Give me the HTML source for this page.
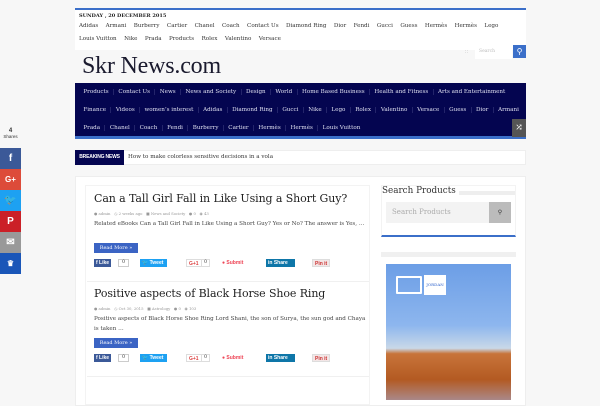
<!DOCTYPE html>
<html><head><meta charset="utf-8"><style>
*{margin:0;padding:0;box-sizing:border-box}
body{width:600px;height:400px;overflow:hidden;background:#f7f7f7;font-family:"DejaVu Serif",serif;position:relative;color:#333}
.a{position:absolute}
.top{left:75px;top:8px;width:451px;height:2px;background:#3b6fc9}
.bar{left:75px;top:10px;width:451px;height:40px;background:#fff}
.date{left:79px;top:13px;font-size:5px;font-weight:bold;color:#222}
.links{left:79px;font-size:5.6px;color:#333;white-space:nowrap}
.links span{margin-right:7.4px}
.logo{left:82px;top:53px;font-size:24px;color:#1a1a2e;font-family:"Liberation Serif",serif;letter-spacing:-.2px}
.nav{left:75px;top:83px;width:451px;height:56px;background:#040550;border-bottom:3px solid #3b6fc9}
.nav div{position:absolute;left:4px;font-size:5.6px;color:#dfe0f0;white-space:nowrap}
.nav span{display:inline-block;padding:0 4.4px;border-right:1px solid #23246a}
.shuf{left:512px;top:119px;width:14px;height:18px;background:#555;color:#fff;font-size:9px;text-align:center;line-height:18px}
.bn{left:75px;top:150px;width:451px;height:15px;background:#fff;border:1px solid #eee}
.bnl{left:75px;top:150px;width:49px;height:15px;background:#040550;color:#fff;font:bold 5px "Liberation Sans",sans-serif;text-align:center;line-height:15px;white-space:nowrap;letter-spacing:-.2px}
.box{left:75px;top:176px;width:451px;height:230px;background:#fff;border:1px solid #eee}
h2{position:absolute;font-weight:normal;font-size:11px;color:#222;white-space:nowrap;letter-spacing:-.1px}
.meta{position:absolute;font-size:3.8px;color:#999;white-space:nowrap}
.ex{position:absolute;font-size:5.6px;color:#444;line-height:9.5px;width:272px}
.rm{position:absolute;width:44px;height:10px;background:#3b64c4;color:#fff;font-size:5px;line-height:10px;text-align:center}
.sh{position:absolute;height:8px;font:bold 5px "Liberation Sans",sans-serif;color:#fff;line-height:8px;padding:0 2px;white-space:nowrap}
.sep{position:absolute;left:87px;width:282px;height:1px;background:#f0f0f0}
.side{position:absolute;width:21px;height:21px;color:#fff;text-align:center;font:bold 10px "Liberation Sans",sans-serif;line-height:21px}
</style></head><body>
<div class="a top"></div><div class="a bar"></div>
<div class="a date">SUNDAY , 20 DECEMBER 2015</div>
<div class="a links" style="top:23px"><span>Adidas</span><span>Armani</span><span>Burberry</span><span>Cartier</span><span>Chanel</span><span>Coach</span><span>Contact Us</span><span>Diamond Ring</span><span>Dior</span><span>Fendi</span><span>Gucci</span><span>Guess</span><span>Hermès</span><span>Hermès</span><span>Lego</span></div>
<div class="a links" style="top:36px"><span>Louis Vuitton</span><span>Nike</span><span>Prada</span><span>Products</span><span>Rolex</span><span>Valentino</span><span>Versace</span></div>
<div class="a" style="left:465px;top:49px;font-size:5px;color:#aaa">&#8759;</div>
<div class="a" style="left:475px;top:45px;width:37px;height:14px;background:#fff;font-size:4.5px;color:#bbb;line-height:14px;padding-left:4px">Search</div>
<div class="a" style="left:513px;top:45px;width:13px;height:13px;background:#3b6fc9;color:#fff;font-size:8px;text-align:center;line-height:13px">&#9906;</div>
<div class="a logo">Skr News.com</div>
<div class="a nav">
<div style="top:6px"><span>Products</span><span>Contact Us</span><span>News</span><span>News and Society</span><span>Design</span><span>World</span><span>Home Based Business</span><span>Health and Fitness</span><span style="border:0">Arts and Entertainment</span></div>
<div style="top:24px"><span>Finance</span><span>Videos</span><span>women’s interest</span><span>Adidas</span><span>Diamond Ring</span><span>Gucci</span><span>Nike</span><span>Lego</span><span>Rolex</span><span>Valentino</span><span>Versace</span><span>Guess</span><span>Dior</span><span style="border:0">Armani</span></div>
<div style="top:42px"><span>Prada</span><span>Chanel</span><span>Coach</span><span>Fendi</span><span>Burberry</span><span>Cartier</span><span>Hermès</span><span>Hermès</span><span style="border:0">Louis Vuitton</span></div>
</div>
<div class="a shuf">&#10542;</div>
<div class="a bn"></div><div class="a bnl">BREAKING NEWS</div>
<div class="a" style="left:128px;top:154px;font-size:5.6px;color:#333">How to make colorless sensitive decisions in a vola</div>
<div class="a box"></div>
<div class="a" style="left:85px;top:185px;width:285px;height:220px;background:#fff;border:1px solid #f3f3f3"></div>
<h2 style="left:94px;top:192px">Can a Tall Girl Fall in Like Using a Short Guy?</h2>
<div class="meta" style="left:94px;top:211px">&#9679; admin &nbsp; &#9719; 2 weeks ago &nbsp; &#9632; News and Society &nbsp; &#9679; 0 &nbsp; &#9673; 43</div>
<div class="ex" style="left:94px;top:220px">Related eBooks Can a Tall Girl Fall in Like Using a Short Guy? Yes or No? The answer is Yes, …</div>
<div class="rm" style="left:94px;top:243px">Read More »</div>
<div class="sh" style="left:94px;top:259px;background:#3b5998">f Like</div><div class="a" style="left:118px;top:259px;width:11px;height:8px;border:1px solid #ccc;font-size:4.5px;text-align:center">0</div>
<div class="sh" style="left:140px;top:259px;background:#1da1f2;width:27px">🐦 Tweet</div>
<div class="sh" style="left:186px;top:259px;background:#fff;color:#d44;border:1px solid #ddd">G+1</div><div class="a" style="left:201px;top:259px;width:9px;height:8px;border:1px solid #ddd;font-size:4.5px;text-align:center">0</div>
<div class="sh" style="left:220px;top:259px;color:#e45;background:none">● Submit</div>
<div class="sh" style="left:266px;top:259px;background:#0e76a8;width:29px">in Share</div>
<div class="sh" style="left:312px;top:259px;background:#f3e6e6;color:#c33;border:1px solid #ddd">Pin it</div>
<div class="sep" style="top:281px"></div>
<h2 style="left:94px;top:287px">Positive aspects of Black Horse Shoe Ring</h2>
<div class="meta" style="left:94px;top:306px">&#9679; admin &nbsp; &#9719; Oct 30, 2015 &nbsp; &#9632; Astrology &nbsp; &#9679; 0 &nbsp; &#9673; 103</div>
<div class="ex" style="left:94px;top:315px">Positive aspects of Black Horse Shoe Ring Lord Shani, the son of Surya, the sun god and Chaya is taken …</div>
<div class="rm" style="left:94px;top:338px">Read More »</div>
<div class="sh" style="left:94px;top:354px;background:#3b5998">f Like</div><div class="a" style="left:118px;top:354px;width:11px;height:8px;border:1px solid #ccc;font-size:4.5px;text-align:center">0</div>
<div class="sh" style="left:140px;top:354px;background:#1da1f2;width:27px">🐦 Tweet</div>
<div class="sh" style="left:186px;top:354px;background:#fff;color:#d44;border:1px solid #ddd">G+1</div><div class="a" style="left:201px;top:354px;width:9px;height:8px;border:1px solid #ddd;font-size:4.5px;text-align:center">0</div>
<div class="sh" style="left:220px;top:354px;color:#e45;background:none">● Submit</div>
<div class="sh" style="left:266px;top:354px;background:#0e76a8;width:29px">in Share</div>
<div class="sh" style="left:312px;top:354px;background:#f3e6e6;color:#c33;border:1px solid #ddd">Pin it</div>
<div class="sep" style="top:376px"></div>
<div class="a" style="left:381px;top:185px;width:135px;height:52px;background:#fff;border:1px solid #f3f3f3;border-bottom:2px solid #3b6fc9"></div>
<div class="a" style="left:382px;top:186px;font-size:8.8px;color:#333">Search Products</div>
<div class="a" style="left:459px;top:191px;width:56px;height:4px;background:#eee"></div>
<div class="a" style="left:386px;top:202px;width:103px;height:21px;background:#f3f3f3;font-size:7px;color:#aaa;line-height:21px;padding-left:6px">Search Products</div>
<div class="a" style="left:489px;top:202px;width:22px;height:21px;background:#bbb;font-size:6px;text-align:center;line-height:21px">&#9906;</div>
<div class="a" style="left:381px;top:252px;width:135px;height:5px;background:#f0f0f0"></div>
<div class="a" style="left:386px;top:264px;width:125px;height:136px;background:linear-gradient(#6c9ee6 0%,#8db6ee 45%,#c9d8e8 62%,#c8743a 66%,#b35a22 85%,#a88 100%)"></div>
<div class="a" style="left:396px;top:276px;width:26px;height:18px;border:2px solid #fff;border-radius:1px"></div>
<div class="a" style="left:424px;top:275px;width:22px;height:20px;background:#fff;font-size:4px;color:#36c;text-align:center;line-height:20px">JORDAN</div>
<div class="a" style="left:0;top:128px;width:21px;text-align:center;font:bold 6px 'Liberation Sans',sans-serif">4<br><span style="font-weight:normal;font-size:4.5px">Shares</span></div>
<div class="side" style="left:0;top:148px;background:#3b5998">f</div>
<div class="side" style="left:0;top:169px;background:#dd4b39;font-size:8px">G+</div>
<div class="side" style="left:0;top:190px;background:#1da1f2">🐦</div>
<div class="side" style="left:0;top:211px;background:#cb2027">P</div>
<div class="side" style="left:0;top:232px;background:#999">✉</div>
<div class="side" style="left:0;top:253px;background:#1a56b8;font-size:8px">♛</div>
</body></html>
